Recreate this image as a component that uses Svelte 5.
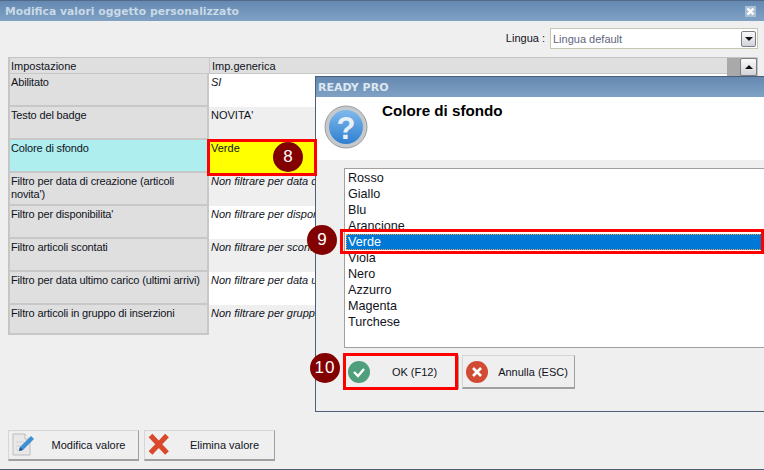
<script>
  const rows = [
    { label: "Abilitato", value: "SI", em: true },
    { label: "Testo del badge", value: "NOVITA'" },
    { label: "Colore di sfondo", value: "Verde", active: true },
    { label: "Filtro per data di creazione (articoli novita')", value: "Non filtrare per data di creazione", em: true },
    { label: "Filtro per disponibilita'", value: "Non filtrare per disponibilita'", em: true },
    { label: "Filtro articoli scontati", value: "Non filtrare per sconto", em: true },
    { label: "Filtro per data ultimo carico (ultimi arrivi)", value: "Non filtrare per data ultimo carico", em: true },
    { label: "Filtro articoli in gruppo di inserzioni", value: "Non filtrare per gruppo di inserzioni", em: true },
  ];
  const colors = ["Rosso", "Giallo", "Blu", "Arancione", "Verde", "Viola", "Nero", "Azzurro", "Magenta", "Turchese"];
</script>

<div class="window">
  <div class="titlebar">
    <span>Modifica valori oggetto personalizzato</span>
    <span class="close">
      <svg width="11" height="11" viewBox="0 0 11 11"><path d="M2.500 2.500l6 6M8.500 2.500l-6 6" stroke="#fff" stroke-width="2.400"/></svg>
    </span>
  </div>

  <div class="langbar">
    <span>Lingua :</span>
    <div class="combo">
      <span>Lingua default</span>
      <span class="combo-btn"><i class="tri down"></i></span>
    </div>
  </div>

  <div class="grid-wrap">
    <div class="grid">
      <div class="row head">
        <div class="cell name">Impostazione</div>
        <div class="cell val">Imp.generica</div>
      </div>
      {#each rows as r, i}
        <div class="row" class:last={i === rows.length - 1}>
          <div class="cell name" class:cyan={r.active}>{r.label}</div>
          <div class="cell val" class:odd={i % 2 === 1} class:yellow={r.active} class:em={r.em}>{r.value}</div>
        </div>
      {/each}
    </div>
    <div class="scroll">
      <span class="scroll-btn"><i class="tri up"></i></span>
    </div>
  </div>

  <div class="footer">
    <button class="btn">
      <svg width="26" height="26" viewBox="0 0 26 26">
        <path d="M2 2h12l5 5v16H2z" fill="#e8e8e8" stroke="#bdbdbd"/>
        <path d="M14 2v5h5" fill="#f6f6f6" stroke="#bdbdbd"/>
        <path d="M5 10h8M5 14h5M5 18h4" stroke="#d2d2d2"/>
        <path d="M8 19l1-4L20 4l3 3-11 11z" fill="#3f8fd6"/>
        <path d="M8 19l1-4 3 3z" fill="#26527e"/>
      </svg>
      <span>Modifica valore</span>
    </button>
    <button class="btn">
      <svg width="26" height="26" viewBox="0 0 26 26">
        <path d="M3.500 3.500L20 21M20 3.500L3.500 21" stroke="#d9492c" stroke-width="5.200" fill="none"/>
      </svg>
      <span>Elimina valore</span>
    </button>
  </div>

  <div class="dialog">
    <div class="dlg-title">READY PRO</div>
    <div class="dlg-head">
      <svg width="44" height="44" viewBox="0 0 44 44">
        <defs>
          <linearGradient id="ball" x1="0" y1="0" x2="0" y2="1">
            <stop offset="0" stop-color="#7fb9ec"/>
            <stop offset="1" stop-color="#2f7fd0"/>
          </linearGradient>
        </defs>
        <circle cx="22" cy="22" r="21" fill="#c6c9cc" stroke="#9a9da0"/>
        <circle cx="22" cy="22" r="17" fill="url(#ball)"/>
        <text x="22" y="34" text-anchor="middle" class="qmark">?</text>
      </svg>
      <h2>Colore di sfondo</h2>
    </div>
    <div class="dlg-body">
      <div class="list">
        {#each colors as c}
          <div class="item" class:sel={c === "Verde"}>{c}</div>
        {/each}
      </div>
      <div class="dlg-btns">
        <button class="btn small ok">
          <svg width="22" height="22" viewBox="0 0 22 22">
            <circle cx="11" cy="11" r="11" fill="#4f9f7c"/>
            <path d="M6 11l4 4 6-7" fill="none" stroke="#fff" stroke-width="2.400"/>
          </svg>
          <span>OK (F12)</span>
        </button>
        <button class="btn small cancel">
          <svg width="22" height="22" viewBox="0 0 22 22">
            <circle cx="11" cy="11" r="11" fill="#d14b33"/>
            <path d="M7 7l8 8M15 7l-8 8" stroke="#fff" stroke-width="2.600"/>
          </svg>
          <span>Annulla (ESC)</span>
        </button>
      </div>
    </div>
  </div>

  <div class="mark box-cell"></div>
  <div class="mark box-item"></div>
  <div class="mark box-ok"></div>
  <div class="num n8">8</div>
  <div class="num n9">9</div>
  <div class="num n10">10</div>
</div>

<style>
  :global(body) { margin: 0; background: #efefef; }

  .window {
    position: relative;
    width: 764px;
    height: 470px;
    overflow: hidden;
    display: flex;
    flex-direction: column;
    background: #efefef;
    border-bottom: 1px solid #4b5c6e;
    box-sizing: border-box;
    font: 11px "Liberation Sans", sans-serif;
    color: #10131c;
  }

  .titlebar {
    height: 21px;
    flex: none;
    box-sizing: border-box;
    border-top: 1px solid #4f6a88;
    padding: 0 8px 0 5px;
    display: flex;
    align-items: center;
    justify-content: space-between;
    background: linear-gradient(#6589b2, #7fa1c4);
    color: #c9d9e7;
    font: bold 10.800px "DejaVu Sans", sans-serif;
  }
  .close {
    width: 11px;
    height: 11px;
    display: flex;
    background: #a9bfd6;
  }

  .langbar {
    height: 36px;
    flex: none;
    box-sizing: border-box;
    padding: 7px 6px 0 0;
    display: flex;
    justify-content: flex-end;
    gap: 5px;
  }
  .langbar > span { line-height: 21px; }
  .combo {
    width: 208px;
    height: 21px;
    box-sizing: border-box;
    border: 1px solid #c9c7b3;
    background: #fff;
    color: #5f6580;
    padding-left: 2px;
    display: flex;
    align-items: center;
    justify-content: space-between;
  }
  .combo-btn, .scroll-btn {
    width: 15px;
    height: 16px;
    margin-right: 1px;
    box-sizing: border-box;
    border: 1px solid #7d7f85;
    border-radius: 2px;
    background: linear-gradient(#fafafa, #d2d3da);
    display: flex;
    align-items: center;
    justify-content: center;
  }
  .tri { width: 0; height: 0; border: 4px solid transparent; }
  .tri.down { border-top-color: #111; border-bottom: 0; }
  .tri.up { border-bottom-color: #111; border-top: 0; }

  .grid-wrap {
    margin: 0 6px 0 8px;
    height: 278px;
    flex: none;
    box-sizing: border-box;
    border: 1px solid #c4c4c4;
    border-width: 1px 1px 2px;
    display: flex;
  }
  .grid { flex: 1; }
  .row {
    display: grid;
    grid-template-columns: 200px 1fr;
    height: 33px;
  }
  .row.head { height: 16px; }
  .row.last { height: 30px; }
  .cell {
    padding: 2px 1px 0 1px;
    line-height: 13px;
    box-sizing: border-box;
  }
  .name {
    background: #dfdfdf;
    border: solid #c8c8c8;
    border-width: 0 2px 2px 1px;
    letter-spacing: -0.15px;
  }
  .val { background: #fff; padding-left: 2px; white-space: nowrap; overflow: hidden; }
  .val.odd { background: #efefef; }
  .val.em { font-style: italic; }
  .head .name, .head .val { background: #dfdfdf; border: solid #c8c8c8; border-width: 0 0 2px 1px; padding-top: 2px; letter-spacing: 0; }
  .name.cyan { background: #afeeee; }
  .val.yellow { background: #ffff00; }

  .scroll {
    width: 30px;
    flex: none;
    background: #a9a9a9;
    display: flex;
    justify-content: flex-end;
  }
  .scroll-btn { width: 17px; height: 18px; margin: 0; }

  .footer {
    margin-top: auto;
    padding: 0 0 8px 8px;
    display: flex;
    gap: 5px;
  }
  .btn {
    width: 131px;
    height: 31px;
    padding: 0 0 0 2px;
    box-sizing: border-box;
    border: 1px solid #d6d6d6;
    border-right-color: #a0a0a0;
    border-bottom: 2px solid #a0a0a0;
    background: #efefef;
    font: inherit;
    color: inherit;
    display: flex;
    align-items: center;
  }
  .btn span { flex: 1; text-align: center; padding-left: 2px; }

  .dialog {
    position: absolute;
    left: 315px;
    top: 76px;
    width: 460px;
    height: 336px;
    box-sizing: border-box;
    border: 1px solid #4b5f76;
    border-right: 0;
    background: #efefef;
  }
  .dlg-title {
    height: 20px;
    padding-left: 2px;
    background: linear-gradient(#6589b2, #7fa1c4);
    color: #dce7f1;
    font: bold 11px/21px "DejaVu Sans", sans-serif;
  }
  .dlg-head {
    height: 63px;
    background: #fff;
    display: flex;
    gap: 14px;
    padding: 8px 0 0 8px;
    box-sizing: border-box;
  }
  .dlg-head h2 {
    margin: -2px 0 0;
    font: bold 15.200px "Liberation Sans", sans-serif;
    color: #000;
    line-height: 16px;
  }
  .qmark { font: bold 31px "Liberation Sans", sans-serif; fill: #e8f1fa; }
  .dlg-body { padding: 8px 0 0 28px; }
  .list {
    width: 440px;
    height: 180px;
    box-sizing: border-box;
    border: 1px solid #a0a0a0;
    border-right: 0;
    background: #fff;
    padding-top: 1px;
    font-size: 12.600px;
  }
  .item { height: 16px; line-height: 16px; padding-left: 3px; }
  .item.sel {
    background: #0078d7;
    color: #fff;
    outline: 1px dotted #f0a040;
    outline-offset: -1px;
    margin-left: 1px;
    padding-left: 2px;
  }
  .dlg-btns { display: flex; gap: 3px; margin-top: 7px; padding-left: 1px; }
  .btn.small { height: 34px; width: 113px; }
  .btn.small.ok { width: 114px; padding-left: 2px; }
  .btn.small.ok span { padding-left: 1px; padding-right: 0; }
  .btn.small.cancel { padding-left: 3px; }
  .btn.small.cancel span { padding-left: 4px; }

  .mark { position: absolute; box-sizing: border-box; border: 3px solid #ff0000; }
  .box-cell { left: 207px; top: 139px; width: 110px; height: 37px; }
  .box-item { left: 340px; top: 229px; width: 424px; height: 25px; }
  .box-ok { left: 343px; top: 353px; width: 115px; height: 37px; }

  .num {
    position: absolute;
    width: 30px;
    height: 30px;
    border-radius: 50%;
    background: #820000;
    color: #fff;
    text-align: center;
    font: 17px/30px "Liberation Sans", sans-serif;
  }
  .n8 { left: 273px; top: 142px; }
  .n9 { left: 307px; top: 225px; }
  .n10 { left: 310px; top: 353px; letter-spacing: 1px; }
</style>
